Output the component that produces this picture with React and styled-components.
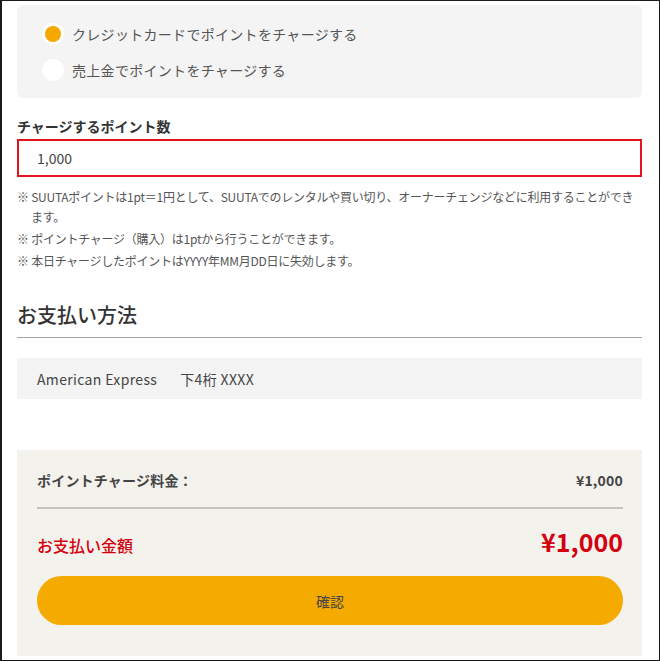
import React, { useState } from "react";
import styled, { createGlobalStyle } from "styled-components";

const GlobalStyle = createGlobalStyle`
  body {
    margin: 0;
    background: #fff;
    font-family: "Noto Sans CJK JP", "Noto Sans", sans-serif;
    color: #333;
  }
`;

const Frame = styled.div`
  width: 660px;
  height: 661px;
  box-sizing: border-box;
  border: 1px solid #1a1a1a;
  border-left-width: 2px;
  padding: 4px 17px 0 15px;
  overflow: hidden;
`;

const ChoiceBox = styled.div`
  background: #f4f4f4;
  border-radius: 6px;
  padding: 18px 25px 17px;
  display: flex;
  flex-direction: column;
  gap: 14px;
`;

const ChoiceRow = styled.label`
  display: flex;
  align-items: center;
  gap: 8px;
  font-size: 14px;
  letter-spacing: 0.3px;
  color: #555;
  cursor: pointer;
`;

const RadioDot = styled.span`
  width: 22px;
  height: 22px;
  border-radius: 50%;
  background: #fff;
  display: flex;
  align-items: center;
  justify-content: center;
  flex-shrink: 0;

  &::after {
    content: "";
    width: 16px;
    height: 16px;
    border-radius: 50%;
    background: ${(p) => (p.$checked ? "#f5a800" : "transparent")};
  }
`;

const FieldLabel = styled.div`
  margin-top: 18px;
  font-size: 14px;
  line-height: 20px;
  font-weight: 700;
  color: #333;
`;

const AmountInput = styled.div`
  margin-top: 3px;
  height: 38px;
  box-sizing: border-box;
  border: 2px solid #e2141e;
  padding: 0 18px;
  display: flex;
  align-items: center;
  font-size: 14px;
  color: #444;
`;

const Notes = styled.div`
  margin-top: 10px;
  display: flex;
  flex-direction: column;
  gap: 2px;
`;

const Note = styled.p`
  margin: 0;
  font-size: 12px;
  line-height: 20px;
  letter-spacing: -0.25px;
  color: #555;
  padding-left: 14px;
  text-indent: -14px;
`;

const SectionTitle = styled.h2`
  margin: 29px 0 0;
  font-size: 20px;
  line-height: 30px;
  font-weight: 500;
  color: #333;
  padding-bottom: 7px;
  border-bottom: 1px solid #a4a4a4;
`;

const CardRow = styled.div`
  margin-top: 20px;
  height: 41px;
  background: #f4f4f4;
  padding: 0 20px;
  display: flex;
  align-items: center;
  gap: 23px;
  font-size: 14px;
  letter-spacing: 0.35px;
  color: #444;
`;

const Summary = styled.div`
  margin-top: 51px;
  background: #f3f2ec;
  padding: 20px 19px 31px 20px;
`;

const FeeRow = styled.div`
  display: flex;
  justify-content: space-between;
  align-items: center;
  font-size: 14px;
  line-height: 20px;
  font-weight: 700;
  letter-spacing: 0.2px;
  color: #444;
  padding-bottom: 17px;
  border-bottom: 2px solid #c4c4c4;
`;

const TotalRow = styled.div`
  margin-top: 14px;
  display: flex;
  justify-content: space-between;
  align-items: baseline;
  color: #d4000f;
`;

const TotalLabel = styled.span`
  font-size: 16px;
  font-weight: 500;
`;

const TotalPrice = styled.span`
  font-size: 25px;
  line-height: 36px;
  font-weight: 700;
`;

const ConfirmButton = styled.button`
  margin-top: 17px;
  width: 100%;
  height: 49px;
  border: none;
  border-radius: 25px;
  background: #f5aa00;
  font-family: inherit;
  font-size: 14px;
  color: #444;
  cursor: pointer;
`;

const choices = ["クレジットカードでポイントをチャージする", "売上金でポイントをチャージする"];

export default function App() {
  const [selected, setSelected] = useState(0);

  return (
    <>
      <GlobalStyle />
      <Frame>
        <ChoiceBox>
          {choices.map((c, i) => (
            <ChoiceRow key={c} onClick={() => setSelected(i)}>
              <RadioDot $checked={selected === i} />
              {c}
            </ChoiceRow>
          ))}
        </ChoiceBox>

        <FieldLabel>チャージするポイント数</FieldLabel>
        <AmountInput>1,000</AmountInput>

        <Notes>
          <Note>※ SUUTAポイントは1pt＝1円として、SUUTAでのレンタルや買い切り、オーナーチェンジなどに利用することができます。</Note>
          <Note>※ ポイントチャージ（購入）は1ptから行うことができます。</Note>
          <Note>※ 本日チャージしたポイントはYYYY年MM月DD日に失効します。</Note>
        </Notes>

        <SectionTitle>お支払い方法</SectionTitle>
        <CardRow>
          <span>American Express</span>
          <span>下4桁 XXXX</span>
        </CardRow>

        <Summary>
          <FeeRow>
            <span>ポイントチャージ料金：</span>
            <span>¥1,000</span>
          </FeeRow>
          <TotalRow>
            <TotalLabel>お支払い金額</TotalLabel>
            <TotalPrice>¥1,000</TotalPrice>
          </TotalRow>
          <ConfirmButton>確認</ConfirmButton>
        </Summary>
      </Frame>
    </>
  );
}
